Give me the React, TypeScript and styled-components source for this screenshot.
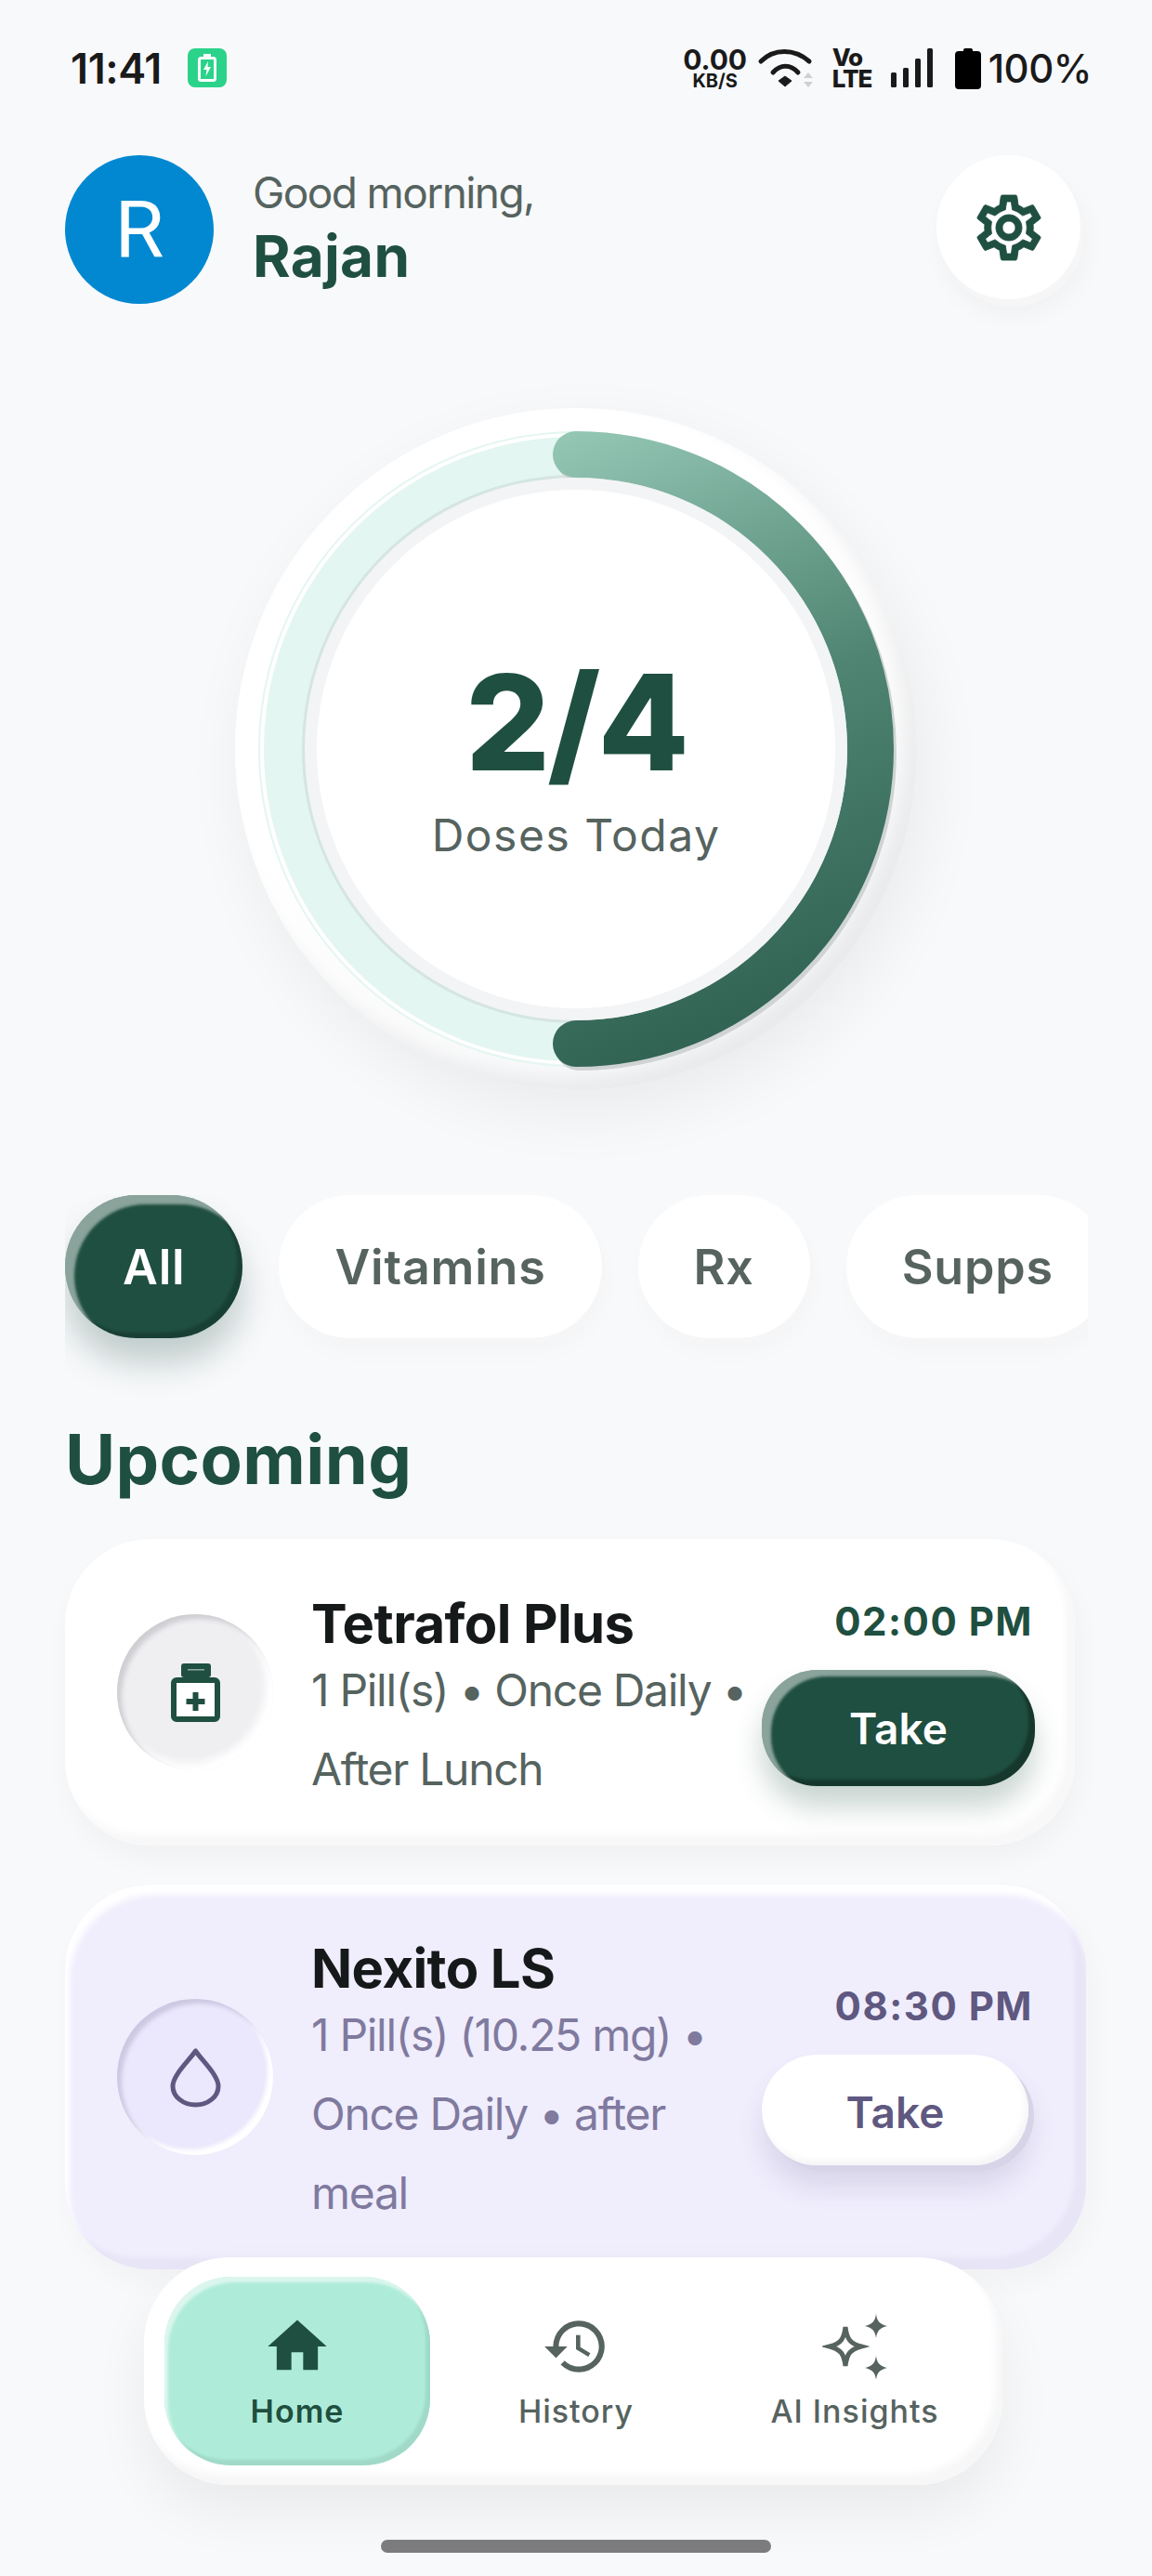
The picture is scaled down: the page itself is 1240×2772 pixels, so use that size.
import React from 'react';
import styled, { createGlobalStyle } from 'styled-components';
import { MdHistory, MdHome, MdOutlineSettings } from 'react-icons/md';

const GREEN = '#1f4f40';
const GREY = '#56635f';
const LILAC = '#5f5880';

const filters = ['All', 'Vitamins', 'Rx', 'Supps'];

const BottleIcon = () => (
  <svg width="53" height="63" viewBox="0 0 53 63">
    <rect x="11" y="0" width="32" height="15" rx="3" fill={GREEN} />
    <rect x="18" y="6" width="18" height="1.5" fill="#8fa9a1" />
    <rect x="3" y="18" width="47" height="42" rx="3" fill="#fff" stroke={GREEN} strokeWidth="6" />
    <path d="M23.5 31h6v7h7v6h-7v7h-6v-7h-7v-6h7z" fill={GREEN} />
  </svg>
);

const DropIcon = () => (
  <svg width="55" height="65" viewBox="0 0 55 65">
    <path
      d="M27.5 4C20 15 3 30 3 42a24.5 20 0 0 0 49 0C52 30 35 15 27.5 4z"
      fill="none"
      stroke={LILAC}
      strokeWidth="5"
      strokeLinejoin="round"
    />
  </svg>
);

const SparkIcon = () => (
  <svg width="70" height="70" viewBox="0 0 70 70">
    <path
      d="M25 14C26.500 26 29 31.500 42 35C29 38.500 26.500 44 25 56C23.500 44 21 38.500 8 35C21 31.500 23.500 26 25 14z"
      fill="none"
      stroke={GREY}
      strokeWidth="5"
      strokeLinejoin="miter"
    />
    <path d="M58 0C59 8 62 11 70 13C62 15 59 18 58 26C57 18 54 15 46 13C54 11 57 8 58 0z" fill={GREY} />
    <path d="M58 45C59 53 62 56 70 58C62 60 59 63 58 71C57 63 54 60 46 58C54 56 57 53 58 45z" fill={GREY} />
  </svg>
);

const WifiIcon = () => (
  <svg width="60" height="44" viewBox="0 0 60 44">
    <path d="M4 15C18 1 40 1 56 15" fill="none" stroke="#1a1a1a" strokeWidth="5" strokeLinecap="round" />
    <path d="M17 27C25 18 36 18 44 27" fill="none" stroke="#1a1a1a" strokeWidth="5" strokeLinecap="round" />
    <path d="M30 31L37 36L30 42L23 36z" fill="#1a1a1a" stroke="#1a1a1a" strokeWidth="1" strokeLinejoin="round" />
    <path d="M55 27L60 33H50z M55 43L60 37H50z" fill="#d0d0d2" />
  </svg>
);

const SignalIcon = () => (
  <svg width="45" height="42" viewBox="0 0 45 42">
    <rect x="0" y="26" width="6" height="16" rx="1.500" fill="#1a1a1a" />
    <rect x="13" y="21" width="6" height="21" rx="1.500" fill="#1a1a1a" />
    <rect x="26" y="11" width="6" height="31" rx="1.500" fill="#1a1a1a" />
    <rect x="39" y="0" width="6" height="42" rx="1.500" fill="#1a1a1a" />
  </svg>
);

const BatteryIcon = () => (
  <svg width="28" height="45" viewBox="0 0 28 45">
    <path
      d="M9 3a2 2 0 0 1 2-2h6a2 2 0 0 1 2 2v1h5a4 4 0 0 1 4 4v33a4 4 0 0 1-4 4H4a4 4 0 0 1-4-4V8a4 4 0 0 1 4-4h5z"
      fill="#000"
    />
  </svg>
);

const ChargeIcon = () => (
  <svg width="20" height="30" viewBox="0 0 20 30">
    <rect x="6" y="0" width="8" height="4" fill="#fff" />
    <rect x="1.500" y="4.500" width="17" height="24" rx="2" fill="none" stroke="#fff" strokeWidth="3" />
    <path d="M11 8L6 17h3.500L8.500 24L14 14h-3.500z" fill="#fff" />
  </svg>
);

const ProgressRing = () => (
  <RingSvg width="734" height="734" viewBox="0 0 734 734">
    <defs>
      <linearGradient id="arcFill" gradientUnits="userSpaceOnUse" x1="300" y1="30" x2="560" y2="690">
        <stop offset="0" stopColor="#98cab8" />
        <stop offset="0.5" stopColor="#4f8572" />
        <stop offset="1" stopColor="#2f6050" />
      </linearGradient>
    </defs>
    <circle cx="367" cy="367" r="341" fill="none" stroke="#e4f6f1" strokeWidth="2" />
    <circle cx="367" cy="367" r="338" fill="none" stroke="#fff" strokeWidth="3" />
    <circle cx="367" cy="367" r="314" fill="none" stroke="#e3f6f1" strokeWidth="44" />
    <circle cx="367" cy="367" r="293" fill="none" stroke="#d5e5e0" strokeWidth="4" />
    <path
      d="M367 50A317 317 0 0 1 367 684"
      fill="none"
      stroke="#cfd3d4"
      strokeWidth="50"
      strokeLinecap="round"
      transform="translate(3 4)"
    />
    <path
      d="M367 50A317 317 0 0 1 367 684"
      fill="none"
      stroke="url(#arcFill)"
      strokeWidth="50"
      strokeLinecap="round"
    />
  </RingSvg>
);

const App = () => {
  return (
    <Screen>
      <GlobalStyle />

      <StatusBar>
        <StatusLeft>
          <Clock>11:41</Clock>
          <ChargeChip>
            <ChargeIcon />
          </ChargeChip>
        </StatusLeft>
        <StatusRight>
          <NetSpeed>
            <NetValue>0.00</NetValue>
            <NetUnit>KB/S</NetUnit>
          </NetSpeed>
          <WifiIcon />
          <VoLte>
            <span>Vo</span>
            <span>LTE</span>
          </VoLte>
          <SignalSlot>
            <SignalIcon />
          </SignalSlot>
          <BatteryIcon />
          <Percent>100%</Percent>
        </StatusRight>
      </StatusBar>

      <Header>
        <UserBlock>
          <Avatar>R</Avatar>
          <UserText>
            <Greeting>Good morning,</Greeting>
            <UserName>Rajan</UserName>
          </UserText>
        </UserBlock>
        <SettingsButton>
          <GearIcon size={84} color={GREEN} />
        </SettingsButton>
      </Header>

      <RingRow>
        <RingDisc>
          <ProgressRing />
          <RingCenter>
            <DoseCount>2/4</DoseCount>
            <DoseLabel>Doses Today</DoseLabel>
          </RingCenter>
        </RingDisc>
      </RingRow>

      <FilterRow>
        {filters.map((item, index) => (
          <FilterPill key={item} $active={index === 0}>
            {item}
          </FilterPill>
        ))}
      </FilterRow>

      <SectionTitle>Upcoming</SectionTitle>

      <Card>
        <IconWell $top={19}>
          <BottleIcon />
        </IconWell>
        <CardInfo>
          <MedName>Tetrafol Plus</MedName>
          <MedLine>1 Pill(s) • Once Daily •</MedLine>
          <MedLine>After Lunch</MedLine>
        </CardInfo>
        <CardActions $top={2}>
          <DoseTime>02:00 PM</DoseTime>
          <TakeButton>Take</TakeButton>
        </CardActions>
      </Card>

      <Card $lilac>
        <IconWell $lilac $top={62}>
          <DropIcon />
        </IconWell>
        <CardInfo>
          <MedName>Nexito LS</MedName>
          <MedLine $lilac>1 Pill(s) (10.25 mg) •</MedLine>
          <MedLine $lilac>Once Daily • after</MedLine>
          <MedLine $lilac>meal</MedLine>
        </CardInfo>
        <CardActions $top={45}>
          <DoseTime $lilac>08:30 PM</DoseTime>
          <TakeButton $lilac>Take</TakeButton>
        </CardActions>
      </Card>

      <BottomNav>
        <NavTab $active>
          <NavIcon>
            <MdHome size={76} color={GREEN} />
          </NavIcon>
          <NavLabel $active>Home</NavLabel>
        </NavTab>
        <NavTab>
          <NavIcon>
            <MdHistory size={74} color={GREY} />
          </NavIcon>
          <NavLabel>History</NavLabel>
        </NavTab>
        <NavTab>
          <NavIcon>
            <SparkIcon />
          </NavIcon>
          <NavLabel>AI Insights</NavLabel>
        </NavTab>
      </BottomNav>

      <HomeBar />
    </Screen>
  );
};

export default App;

// ========== Styled Components ==========

const GlobalStyle = createGlobalStyle`
  html, body {
    margin: 0;
    padding: 0;
    background: #f8f9fb;
  }
  * {
    box-sizing: border-box;
  }
`;

const Screen = styled.div`
  position: relative;
  width: 1240px;
  height: 2772px;
  overflow: hidden;
  background: #f8f9fb;
  font-family: Inter, 'Liberation Sans', sans-serif;
`;

const StatusBar = styled.div`
  display: flex;
  align-items: center;
  justify-content: space-between;
  height: 46px;
  margin-top: 50px;
  padding: 0 65px 0 76px;
`;

const StatusLeft = styled.div`
  display: flex;
  align-items: center;
  gap: 28px;
`;

const Clock = styled.span`
  font-size: 45px;
  font-weight: 600;
  letter-spacing: -0.4px;
  color: #1a1a1a;
`;

const ChargeChip = styled.div`
  display: flex;
  align-items: center;
  justify-content: center;
  width: 42px;
  height: 42px;
  border-radius: 8px;
  background: #2bd38a;
`;

const StatusRight = styled.div`
  display: flex;
  align-items: center;
  color: #1a1a1a;
`;

const NetSpeed = styled.div`
  display: flex;
  flex-direction: column;
  align-items: center;
  width: 72px;
  margin-right: 9px;
`;

const NetValue = styled.span`
  font-size: 30px;
  line-height: 28px;
  font-weight: 700;
`;

const NetUnit = styled.span`
  font-size: 20px;
  line-height: 18px;
  font-weight: 700;
`;

const VoLte = styled.div`
  display: flex;
  flex-direction: column;
  width: 38px;
  margin-left: 21px;
  font-size: 26px;
  line-height: 23px;
  font-weight: 800;
  letter-spacing: -1px;
`;

const SignalSlot = styled.div`
  margin: 0 24px 0 25px;
  line-height: 0;
`;

const Percent = styled.span`
  margin-left: 8px;
  font-size: 42px;
  font-weight: 500;
  letter-spacing: -0.5px;
`;

const Header = styled.div`
  display: flex;
  align-items: flex-start;
  justify-content: space-between;
  margin-top: 71px;
  padding: 0 77px 0 70px;
`;

const UserBlock = styled.div`
  display: flex;
  align-items: center;
  gap: 43px;
`;

const Avatar = styled.div`
  display: flex;
  align-items: center;
  justify-content: center;
  width: 160px;
  height: 160px;
  border-radius: 50%;
  background: #0288d1;
  color: #fff;
  font-family: Roboto, sans-serif;
  font-size: 86px;
`;

const UserText = styled.div`
  padding-bottom: 4px;
  margin-left: -1px;
`;

const Greeting = styled.div`
  font-size: 46px;
  line-height: 56px;
  letter-spacing: -1.6px;
  color: ${GREY};
`;

const UserName = styled.div`
  margin-top: 5px;
  font-size: 62px;
  line-height: 72px;
  font-weight: 700;
  letter-spacing: 0.3px;
  color: ${GREEN};
`;

const SettingsButton = styled.div`
  display: flex;
  align-items: center;
  justify-content: center;
  width: 155px;
  height: 155px;
  border-radius: 50%;
  background: #fff;
  box-shadow: 4px 8px 0 #f6f6f7, 6px 16px 28px rgba(0, 0, 0, 0.04);
`;

const GearIcon = styled(MdOutlineSettings)`
  path:nth-child(2) {
    stroke: ${GREEN};
    stroke-width: 0.25;
  }
`;

const RingRow = styled.div`
  display: flex;
  justify-content: center;
  margin-top: 112px;
`;

const RingDisc = styled.div`
  position: relative;
  display: flex;
  align-items: center;
  justify-content: center;
  width: 734px;
  height: 734px;
  border-radius: 50%;
  background: linear-gradient(145deg, #ffffff 40%, #f3f4f6 100%);
  box-shadow: inset -14px -14px 18px rgba(0, 0, 0, 0.05), 10px 24px 70px rgba(0, 0, 0, 0.06);
`;

const RingSvg = styled.svg`
  position: absolute;
  top: 0;
  left: 0;
`;

const RingCenter = styled.div`
  position: relative;
  display: flex;
  flex-direction: column;
  align-items: center;
  justify-content: center;
  width: 558px;
  height: 558px;
  border-radius: 50%;
  background: #fff;
  box-shadow: 0 0 0 13px #f3f4f5;
`;

const DoseCount = styled.div`
  margin-top: 18px;
  font-size: 143px;
  line-height: 150px;
  font-weight: 800;
  letter-spacing: -3px;
  color: ${GREEN};
`;

const DoseLabel = styled.div`
  margin-top: 18px;
  font-size: 48px;
  line-height: 58px;
  letter-spacing: 1.5px;
  color: ${GREY};
`;

const FilterRow = styled.div`
  display: flex;
  gap: 39px;
  width: 1101px;
  height: 239px;
  margin: 113px 0 0 70px;
  overflow: hidden;
`;

const FilterPill = styled.div<{ $active?: boolean }>`
  flex: none;
  height: 154px;
  padding: 0 ${(p) => (p.$active ? 62 : 60)}px;
  border-radius: 77px;
  font-size: 52px;
  line-height: 155px;
  font-weight: 600;
  letter-spacing: 0.8px;
  color: ${(p) => (p.$active ? '#fff' : GREY)};
  background: ${(p) => (p.$active ? GREEN : '#fff')};
  box-shadow: ${(p) =>
    p.$active
      ? `inset 10px 10px 3px rgba(255, 255, 255, 0.48), inset -6px -6px 3px rgba(0, 0, 0, 0.2), 0 26px 36px rgba(31, 79, 64, 0.26)`
      : `3px 5px 0 #f6f6f7, 4px 16px 24px rgba(0, 0, 0, 0.02)`};
`;

const SectionTitle = styled.h2`
  margin: 0 0 41px 70px;
  font-size: 74px;
  line-height: 90px;
  font-weight: 700;
  letter-spacing: 0.4px;
  color: ${GREEN};
`;

const Card = styled.div<{ $lilac?: boolean }>`
  display: flex;
  align-items: flex-start;
  width: ${(p) => (p.$lilac ? 1099 : 1087)}px;
  height: ${(p) => (p.$lilac ? 414 : 330)}px;
  margin: ${(p) => (p.$lilac ? '42px' : '0')} 0 0 70px;
  padding: ${(p) => (p.$lilac ? 61 : 62)}px ${(p) => (p.$lilac ? 55 : 43)}px 0 56px;
  border-radius: 92px;
  background: ${(p) => (p.$lilac ? '#f0edfd' : '#fff')};
  box-shadow: ${(p) =>
    p.$lilac
      ? `inset 5px 11px 7px #fff, inset -12px -12px 5px #e8e5f7, 6px 14px 30px rgba(0, 0, 0, 0.03)`
      : `inset -10px -12px 8px #f8f8f9, 4px 14px 30px rgba(0, 0, 0, 0.035)`};
`;

const IconWell = styled.div<{ $lilac?: boolean; $top: number }>`
  flex: none;
  display: flex;
  align-items: center;
  justify-content: center;
  width: 168px;
  height: 168px;
  margin: ${(p) => p.$top}px 41px 0 0;
  border-radius: 50%;
  background: ${(p) => (p.$lilac ? '#ebe7fc' : '#efeff2')};
  box-shadow: ${(p) =>
    p.$lilac
      ? `inset 5px 5px 4px #cdc9e2, inset -6px -6px 4px #fff`
      : `inset 5px 5px 5px #cfcfd3, inset -8px -8px 8px #fff`};
`;

const CardInfo = styled.div`
  flex: 1;
  min-width: 0;
`;

const MedName = styled.div`
  font-size: 58px;
  line-height: 58px;
  font-weight: 700;
  letter-spacing: -0.6px;
  color: #16191a;
`;

const MedLine = styled.div<{ $lilac?: boolean }>`
  font-size: 48px;
  line-height: 85px;
  letter-spacing: -1.3px;
  white-space: nowrap;
  color: ${(p) => (p.$lilac ? '#7f7a9e' : GREY)};
`;

const CardActions = styled.div<{ $top: number }>`
  flex: none;
  display: flex;
  flex-direction: column;
  align-items: flex-end;
  width: 294px;
  margin-top: ${(p) => p.$top}px;
`;

const DoseTime = styled.div<{ $lilac?: boolean }>`
  margin-right: 2px;
  font-size: 42px;
  line-height: 50px;
  font-weight: 700;
  letter-spacing: 1.5px;
  white-space: nowrap;
  color: ${(p) => (p.$lilac ? LILAC : GREEN)};
`;

const TakeButton = styled.div<{ $lilac?: boolean }>`
  align-self: flex-start;
  width: ${(p) => (p.$lilac ? 287 : 294)}px;
  height: ${(p) => (p.$lilac ? 119 : 125)}px;
  margin-top: 27px;
  border-radius: 60px;
  text-align: center;
  font-size: 46px;
  line-height: ${(p) => (p.$lilac ? 124 : 127)}px;
  font-weight: 600;
  color: ${(p) => (p.$lilac ? LILAC : '#fff')};
  background: ${(p) => (p.$lilac ? '#fff' : GREEN)};
  box-shadow: ${(p) =>
    p.$lilac
      ? `inset -4px -6px 6px #f6f6f8, 6px 6px 0 #d7d4e8, 2px 22px 28px rgba(95, 88, 128, 0.16)`
      : `inset 10px 7px 3px rgba(255, 255, 255, 0.48), inset -7px -7px 3px rgba(0, 0, 0, 0.3), 0 22px 30px rgba(31, 79, 64, 0.24)`};
`;

const BottomNav = styled.div`
  position: absolute;
  top: 2429px;
  left: 155px;
  display: grid;
  grid-template-columns: repeat(3, 286px);
  column-gap: 14px;
  width: 924px;
  height: 245px;
  padding: 21px 0 0 22px;
  border-radius: 92px;
  background: #fff;
  box-shadow: inset -8px -12px 8px #f7f7f8, 0 30px 60px rgba(0, 0, 0, 0.06);
`;

const NavTab = styled.div<{ $active?: boolean }>`
  display: flex;
  flex-direction: column;
  align-items: center;
  height: 203px;
  padding-top: 37px;
  border-radius: 72px;
  background: ${(p) => (p.$active ? '#aeecd9' : 'transparent')};
  box-shadow: ${(p) =>
    p.$active ? `inset 4px 6px 3px #dcf6ee, inset -5px -6px 3px #a0d9c8` : 'none'};
`;

const NavIcon = styled.div`
  display: flex;
  align-items: center;
  justify-content: center;
  height: 76px;
`;

const NavLabel = styled.div<{ $active?: boolean }>`
  margin-top: 12px;
  font-size: 34px;
  line-height: 40px;
  font-weight: ${(p) => (p.$active ? 600 : 500)};
  letter-spacing: 1px;
  white-space: nowrap;
  color: ${(p) => (p.$active ? GREEN : GREY)};
`;

const HomeBar = styled.div`
  position: absolute;
  top: 2733px;
  left: 410px;
  width: 420px;
  height: 14px;
  border-radius: 7px;
  background: #7c7c7e;
`;
